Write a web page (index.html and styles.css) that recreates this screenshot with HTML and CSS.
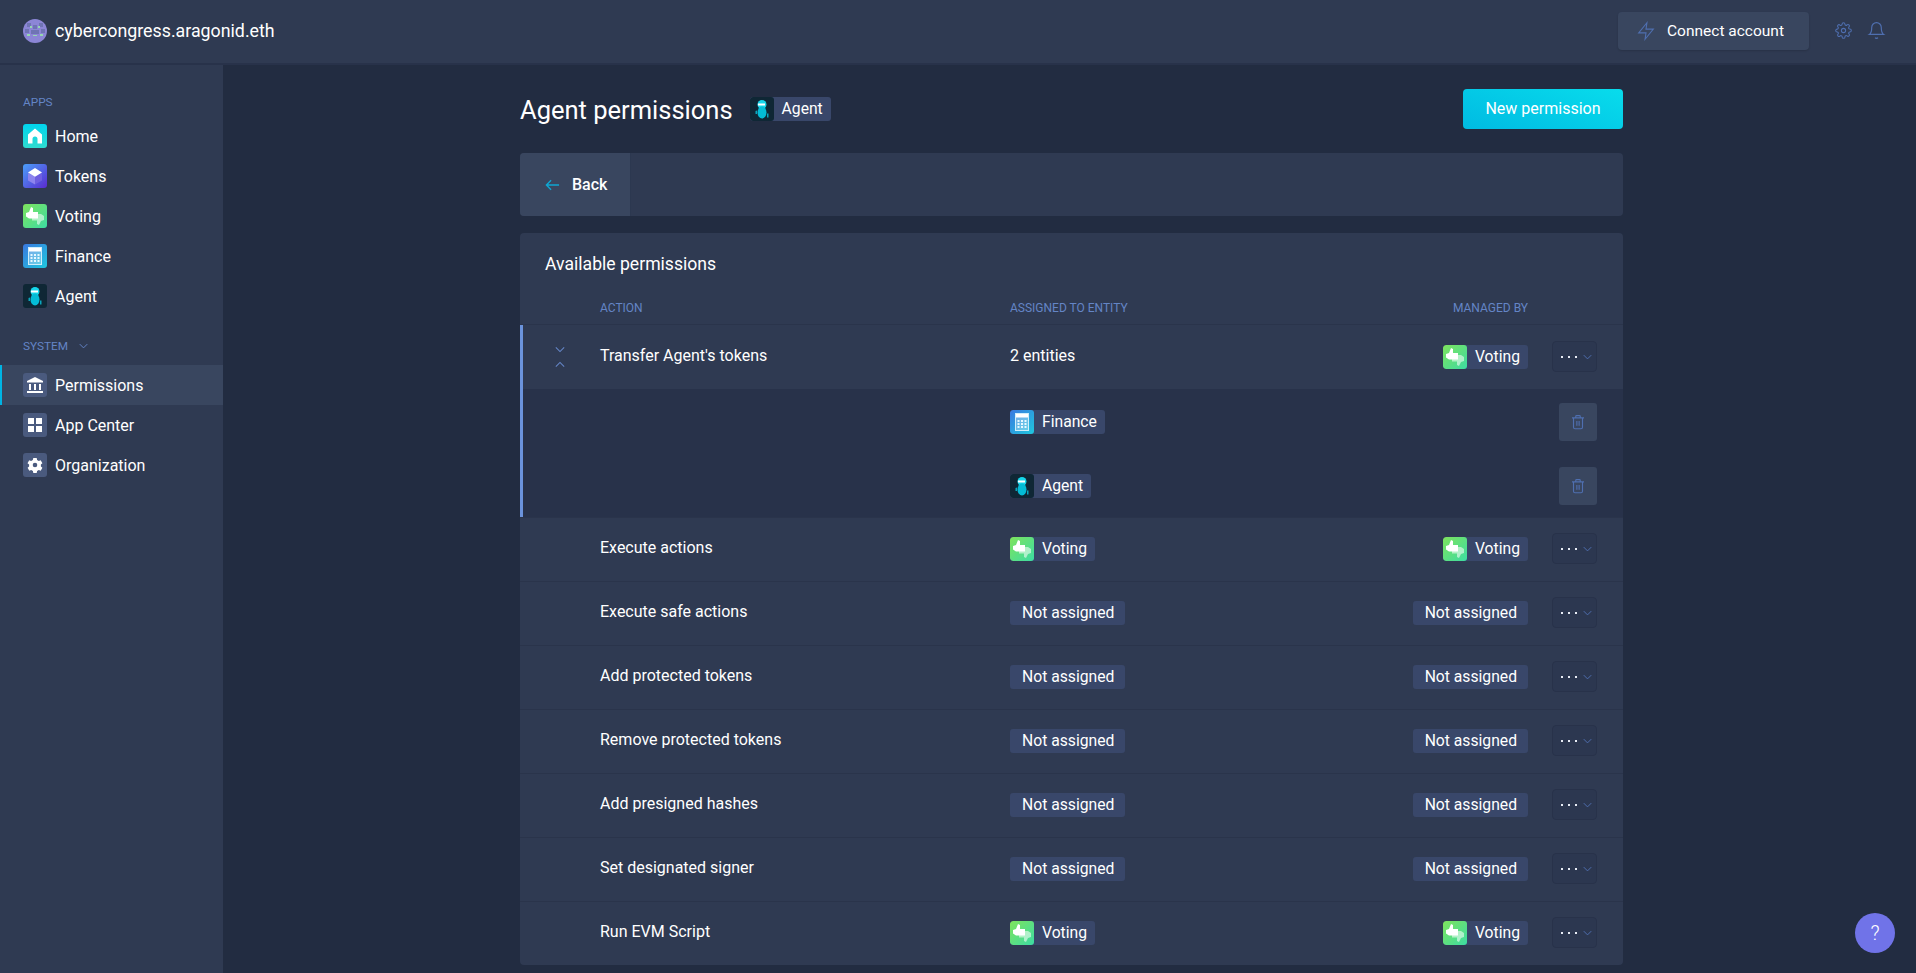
FILE: index.html
```html
<!DOCTYPE html>
<html lang="en">
<head>
  <meta charset="UTF-8" />
  <meta name="viewport" content="width=device-width, initial-scale=1.0" />
  <title>Agent permissions</title>
  <link rel="stylesheet" href="styles.css">
</head>
<body>
  <svg class="sprites" width="0" height="0" aria-hidden="true">
    <symbol id="i-home" viewBox="0 0 24 24">
      <path d="M12 4.500 19 10.500V19.500H14.500V15a2.500 2.500 0 0 0-5 0v4.500H5V10.500Z" fill="#fff"/>
    </symbol>
    <symbol id="i-tokens" viewBox="0 0 24 24">
      <path d="M12 12.500 5 9V16.500L12 20.500Z" fill="#8d84ee"/>
      <path d="M12 12.500 19 9V16.500L12 20.500Z" fill="#6f5fe0"/>
      <path d="M12 4 19 8.500 12 12.800 5 8.500Z" fill="#fff"/>
    </symbol>
    <symbol id="i-voting" viewBox="0 0 24 24">
      <path d="M21 16 18 17 16 21 14 20V16.500H9V10H18L21 12Z" fill="#fff" fill-opacity=".55"/>
      <path d="M3 9 6 8 8 3 10 4V8H15V14.500H6L3 12.500Z" fill="#fff"/>
    </symbol>
    <symbol id="i-finance" viewBox="0 0 24 24">
      <rect x="5.500" y="3.500" width="13" height="17" fill="#fff" fill-opacity=".3" stroke="#cfeefb"/>
      <rect x="6" y="4" width="12" height="3.500" fill="#fff"/>
      <path d="M7.500 10h2v2h-2zM11 10h2v2h-2zM14.500 10h2v2h-2zM7.500 13h2v2h-2zM11 13h2v2h-2zM14.500 13h2v2h-2zM7.500 16h2v2h-2zM11 16h2v2h-2zM14.500 16h2v2h-2z" fill="#e6f8ff"/>
    </symbol>
    <symbol id="i-agent" viewBox="0 0 24 24">
      <circle cx="12" cy="7.500" r="4.500" fill="#16d6ea"/>
      <rect x="8" y="6.500" width="7" height="2" fill="#fff"/>
      <ellipse cx="12" cy="15.500" rx="4.500" ry="6" fill="#04bcd6"/>
      <path d="M5.500 14 7 13.500V17H5.500ZM17 16.500H18.500V20.500H17Z" fill="#0aa6bd"/>
    </symbol>
    <symbol id="i-bank" viewBox="0 0 24 24">
      <path d="M12 4 20 8V9.500H4V8Z M6 11H8V17H6Z M11 11H13V17H11Z M16 11H18V17H16Z M4 18H20V20H4Z" fill="#fff"/>
    </symbol>
    <symbol id="i-grid" viewBox="0 0 24 24">
      <path d="M5 5.500a.500.500 0 0 1 .500-.500H11V11H5ZM13 5H19V11H13ZM5 13H11V19H5ZM13 13H19V19H13Z" fill="#fff"/>
    </symbol>
    <symbol id="i-cog" viewBox="0 0 24 24">
      <path fill-rule="evenodd" d="M10.300 5h3.400l.4 2 1.700 1 1.900-.7 1.700 2.900-1.500 1.300v2l1.500 1.300-1.700 2.900-1.900-.7-1.700 1-.4 2h-3.400l-.4-2-1.700-1-1.900.7-1.700-2.900 1.500-1.300v-2L4.500 10.200l1.700-2.900 1.900.7 1.700-1ZM12 9.700a2.300 2.300 0 1 0 0 4.600 2.300 2.300 0 0 0 0-4.600Z" fill="#fff"/>
    </symbol>
    <symbol id="i-trash" viewBox="0 0 24 24" fill="none" stroke="currentColor" stroke-width="1.500">
      <path d="M4 6.500H20M9 6.500V4.500a1 1 0 0 1 1-1h4a1 1 0 0 1 1 1v2M6 6.500V19a2 2 0 0 0 2 2h8a2 2 0 0 0 2-2V6.500M10.500 10.500v6.500M13.500 10.500v6.500"/>
    </symbol>
    <symbol id="i-down" viewBox="0 0 12 8" fill="none" stroke="currentColor" stroke-width="1.300">
      <path d="M1 1.500 6 6.500 11 1.500"/>
    </symbol>
    <symbol id="i-logo" viewBox="0 0 24 24">
      <circle cx="12" cy="12" r="12" fill="#8c86d6"/>
      <path d="M4 4h4v4H4zM16 4h4v4h-4zM10 6h4v4h-4zM2 10h4v4H2zM18 10h4v4h-4zM8 11h8v4H8z" fill="#6f74b4"/>
      <path d="M7 7h2v2H7zM15 7h2v2h-2zM4 15h3v2H4zM17 15h3v2h-3zM10 17h4v-1h-4z" fill="#96d8b0"/>
    </symbol>
  </svg>

  <header class="topbar">
    <div class="org">
      <svg class="org-logo"><use href="#i-logo"/></svg>
      <span>cybercongress.aragonid.eth</span>
    </div>
    <div class="top-actions">
      <button class="connect-btn">
        <svg viewBox="0 0 24 24" class="line-icon bolt"><polygon points="13 3 4 14 12 14 11 21 20 10 12 10 13 3"/></svg>
        Connect account
      </button>
      <svg viewBox="0 0 24 24" class="line-icon gear">
        <circle cx="12" cy="12" r="3"/>
        <path d="M19.400 15a1.650 1.650 0 0 0 .33 1.820l.06.06a2 2 0 0 1 0 2.830 2 2 0 0 1-2.830 0l-.06-.06a1.650 1.650 0 0 0-1.820-.33 1.650 1.650 0 0 0-1 1.510V21a2 2 0 0 1-2 2 2 2 0 0 1-2-2v-.09A1.650 1.650 0 0 0 9 19.400a1.650 1.650 0 0 0-1.820.33l-.06.06a2 2 0 0 1-2.830 0 2 2 0 0 1 0-2.830l.06-.06a1.650 1.650 0 0 0 .33-1.820 1.650 1.650 0 0 0-1.510-1H3a2 2 0 0 1-2-2 2 2 0 0 1 2-2h.09A1.650 1.650 0 0 0 4.600 9a1.650 1.650 0 0 0-.33-1.820l-.06-.06a2 2 0 0 1 0-2.830 2 2 0 0 1 2.830 0l.06.06a1.650 1.650 0 0 0 1.820.33H9a1.650 1.650 0 0 0 1-1.510V3a2 2 0 0 1 2-2 2 2 0 0 1 2 2v.09a1.650 1.650 0 0 0 1 1.510 1.650 1.650 0 0 0 1.820-.33l.06-.06a2 2 0 0 1 2.830 0 2 2 0 0 1 0 2.830l-.06.06a1.650 1.650 0 0 0-.33 1.820V9a1.650 1.650 0 0 0 1.510 1H21a2 2 0 0 1 2 2 2 2 0 0 1-2 2h-.09a1.650 1.650 0 0 0-1.510 1z"/>
      </svg>
      <svg viewBox="0 0 24 24" class="line-icon bell">
        <path d="M18 8A6 6 0 0 0 6 8c0 7-3 9-3 9h18s-3-2-3-9"/>
        <path d="M13.730 21a2 2 0 0 1-3.460 0"/>
      </svg>
    </div>
  </header>

  <div class="layout">
    <aside class="sidebar">
      <div class="nav-label nav-label-apps">APPS</div>
      <a class="nav-item"><span class="tile tile-home"><svg><use href="#i-home"/></svg></span>Home</a>
      <a class="nav-item"><span class="tile tile-tokens"><svg><use href="#i-tokens"/></svg></span>Tokens</a>
      <a class="nav-item"><span class="tile tile-voting"><svg><use href="#i-voting"/></svg></span>Voting</a>
      <a class="nav-item"><span class="tile tile-finance"><svg><use href="#i-finance"/></svg></span>Finance</a>
      <a class="nav-item"><span class="tile tile-agent"><svg><use href="#i-agent"/></svg></span>Agent</a>
      <div class="nav-label nav-label-system">SYSTEM <svg class="chev"><use href="#i-down"/></svg></div>
      <a class="nav-item active"><span class="tile tile-system"><svg><use href="#i-bank"/></svg></span>Permissions</a>
      <a class="nav-item"><span class="tile tile-system"><svg><use href="#i-grid"/></svg></span>App Center</a>
      <a class="nav-item"><span class="tile tile-system"><svg><use href="#i-cog"/></svg></span>Organization</a>
    </aside>

    <main class="content">
      <div class="page-head">
        <h1>Agent permissions</h1>
        <span class="chip"><span class="tile tile-agent"><svg><use href="#i-agent"/></svg></span><b>Agent</b></span>
        <button class="new-btn">New permission</button>
      </div>

      <div class="back-bar">
        <button class="back-btn">
          <svg viewBox="0 0 16 12" class="back-arrow"><path d="M15 6H1.500M6.500 1 1.500 6l5 5"/></svg>
          Back
        </button>
      </div>

      <section class="card">
        <h2>Available permissions</h2>
        <div class="grid-row thead">
          <span></span>
          <span>ACTION</span>
          <span>ASSIGNED TO ENTITY</span>
          <span class="right">MANAGED BY</span>
          <span></span>
        </div>

        <div class="expanded">
          <div class="grid-row row">
            <span class="toggle"><svg><use href="#i-down"/></svg><svg class="up"><use href="#i-down"/></svg></span>
            <span class="cell-text">Transfer Agent's tokens</span>
            <span class="cell-text">2 entities</span>
            <span class="right"><span class="chip"><span class="tile tile-voting"><svg><use href="#i-voting"/></svg></span><b>Voting</b></span></span>
            <span class="menu-cell"><button class="menu-btn"><i></i><i></i><i></i><svg><use href="#i-down"/></svg></button></span>
          </div>
          <div class="subrows">
            <div class="grid-row subrow">
              <span></span><span></span>
              <span><span class="chip"><span class="tile tile-finance"><svg><use href="#i-finance"/></svg></span><b>Finance</b></span></span>
              <span></span>
              <span class="menu-cell"><button class="trash-btn"><svg><use href="#i-trash"/></svg></button></span>
            </div>
            <div class="grid-row subrow">
              <span></span><span></span>
              <span><span class="chip"><span class="tile tile-agent"><svg><use href="#i-agent"/></svg></span><b>Agent</b></span></span>
              <span></span>
              <span class="menu-cell"><button class="trash-btn"><svg><use href="#i-trash"/></svg></button></span>
            </div>
          </div>
        </div>

        <div class="grid-row row">
          <span></span>
          <span class="cell-text">Execute actions</span>
          <span><span class="chip"><span class="tile tile-voting"><svg><use href="#i-voting"/></svg></span><b>Voting</b></span></span>
          <span class="right"><span class="chip"><span class="tile tile-voting"><svg><use href="#i-voting"/></svg></span><b>Voting</b></span></span>
          <span class="menu-cell"><button class="menu-btn"><i></i><i></i><i></i><svg><use href="#i-down"/></svg></button></span>
        </div>
        <div class="grid-row row">
          <span></span>
          <span class="cell-text">Execute safe actions</span>
          <span><span class="chip"><b>Not assigned</b></span></span>
          <span class="right"><span class="chip"><b>Not assigned</b></span></span>
          <span class="menu-cell"><button class="menu-btn"><i></i><i></i><i></i><svg><use href="#i-down"/></svg></button></span>
        </div>
        <div class="grid-row row">
          <span></span>
          <span class="cell-text">Add protected tokens</span>
          <span><span class="chip"><b>Not assigned</b></span></span>
          <span class="right"><span class="chip"><b>Not assigned</b></span></span>
          <span class="menu-cell"><button class="menu-btn"><i></i><i></i><i></i><svg><use href="#i-down"/></svg></button></span>
        </div>
        <div class="grid-row row">
          <span></span>
          <span class="cell-text">Remove protected tokens</span>
          <span><span class="chip"><b>Not assigned</b></span></span>
          <span class="right"><span class="chip"><b>Not assigned</b></span></span>
          <span class="menu-cell"><button class="menu-btn"><i></i><i></i><i></i><svg><use href="#i-down"/></svg></button></span>
        </div>
        <div class="grid-row row">
          <span></span>
          <span class="cell-text">Add presigned hashes</span>
          <span><span class="chip"><b>Not assigned</b></span></span>
          <span class="right"><span class="chip"><b>Not assigned</b></span></span>
          <span class="menu-cell"><button class="menu-btn"><i></i><i></i><i></i><svg><use href="#i-down"/></svg></button></span>
        </div>
        <div class="grid-row row">
          <span></span>
          <span class="cell-text">Set designated signer</span>
          <span><span class="chip"><b>Not assigned</b></span></span>
          <span class="right"><span class="chip"><b>Not assigned</b></span></span>
          <span class="menu-cell"><button class="menu-btn"><i></i><i></i><i></i><svg><use href="#i-down"/></svg></button></span>
        </div>
        <div class="grid-row row">
          <span></span>
          <span class="cell-text">Run EVM Script</span>
          <span><span class="chip"><span class="tile tile-voting"><svg><use href="#i-voting"/></svg></span><b>Voting</b></span></span>
          <span class="right"><span class="chip"><span class="tile tile-voting"><svg><use href="#i-voting"/></svg></span><b>Voting</b></span></span>
          <span class="menu-cell"><button class="menu-btn"><i></i><i></i><i></i><svg><use href="#i-down"/></svg></button></span>
        </div>
      </section>
    </main>
  </div>

  <button class="help-btn">?</button>
</body>
</html>
```

FILE: styles.css
```css
* {
  box-sizing: border-box;
}
html {
  height: 100%;
  overflow: hidden;
}
body {
  font-family: Roboto, "Noto Sans", Arial, sans-serif;
  font-size: 16px;
  margin: 0;
  height: 100%;
  overflow: hidden;
  display: flex;
  flex-direction: column;
  background-color: #222c41;
  color: #fff;
}
button {
  font: inherit;
  color: inherit;
  border: 0;
  padding: 0;
  cursor: pointer;
}
.sprites {
  position: absolute;
}

/* top bar */
.topbar {
  height: 65px;
  flex: none;
  display: flex;
  align-items: center;
  justify-content: space-between;
  padding: 0 30px 2px 23px;
  background-color: #2f3a52;
  border-bottom: 2px solid #28324a;
}
.org {
  display: flex;
  align-items: center;
  gap: 8px;
  font-size: 17.800px;
}
.org-logo {
  width: 24px;
  height: 24px;
}
.top-actions {
  display: flex;
  align-items: center;
}
.connect-btn {
  width: 191px;
  height: 38px;
  display: flex;
  align-items: center;
  gap: 10px;
  padding-left: 17px;
  background-color: #39465f;
  border-radius: 4px;
  box-shadow: 0 1px 2px rgba(0, 0, 0, 0.15);
  font-size: 15.500px;
}
.line-icon {
  width: 17px;
  height: 17px;
  fill: none;
  stroke: #4f6fb0;
  stroke-width: 1.500;
}
.bolt {
  width: 22px;
  height: 22px;
  stroke-width: 1.200;
}
.gear {
  margin-left: 26px;
}
.bell {
  width: 19px;
  height: 19px;
  margin-left: 15px;
}

/* sidebar */
.layout {
  flex: 1;
  display: flex;
  min-height: 0;
  overflow: hidden;
}
.sidebar {
  width: 223px;
  flex: none;
  background-color: #2f3a52;
}
.nav-label {
  display: flex;
  align-items: center;
  padding-left: 23px;
  font-size: 11.800px;
  color: #6485c6;
  height: 16px;
}
.nav-label-apps {
  margin-top: 29px;
  margin-bottom: 6px;
}
.nav-label-system {
  margin-top: 22px;
  margin-bottom: 11px;
}
.chev {
  width: 9px;
  height: 6px;
  margin-left: 11px;
}
.nav-item {
  height: 40px;
  display: flex;
  align-items: center;
  gap: 8px;
  padding-left: 23px;
}
.nav-item.active {
  background-color: #39465f;
  box-shadow: inset 2px 0 0 #00b4e4;
}

/* app icons */
.tile {
  width: 24px;
  height: 24px;
  flex: none;
  border-radius: 3px;
  overflow: hidden;
}
.tile svg {
  display: block;
  width: 24px;
  height: 24px;
}
.tile-home { background: linear-gradient(180deg, #00d4ee, #2fdcd0); }
.tile-tokens { background: linear-gradient(135deg, #4a9ffa, #5a2bd0); }
.tile-voting { background: linear-gradient(135deg, #7fe35c, #3cdca4); }
.tile-finance { background: linear-gradient(135deg, #3a78e0, #1fc8de); }
.tile-agent { background-color: #0f2735; }
.tile-system { background-color: #4a5a7e; }

/* page */
.content {
  width: 1103px;
  margin-left: 297px;
}
.page-head {
  height: 88px;
  display: flex;
  align-items: center;
}
.page-head h1 {
  margin: 2px 17px 0 0;
  font-size: 25.500px;
  font-weight: 400;
}
.new-btn {
  margin-left: auto;
  width: 160px;
  height: 40px;
  padding-bottom: 2px;
  border-radius: 4px;
  background: linear-gradient(200deg, #08dcec, #00bbe2);
}
.back-bar {
  height: 63px;
  background-color: #2f3a52;
  border-radius: 4px;
  overflow: hidden;
}
.back-btn {
  height: 63px;
  width: 111px;
  display: flex;
  align-items: center;
  gap: 12px;
  padding-left: 25px;
  background-color: #39465f;
  border-right: 1px solid #2c3850;
  font-weight: 500;
}
.back-arrow {
  width: 15px;
  height: 12px;
  fill: none;
  stroke: #0fa6d2;
  stroke-width: 1.500;
}

/* table card */
.card {
  margin-top: 17px;
  background-color: #2f3a52;
  border-radius: 4px;
  overflow: hidden;
}
.card h2 {
  margin: 0;
  height: 62px;
  display: flex;
  align-items: center;
  padding-left: 25px;
  font-size: 17.600px;
  font-weight: 400;
}
.grid-row {
  display: grid;
  grid-template-columns: 80px 410px 1fr 1fr 95px;
  align-items: center;
}
.thead {
  height: 30px;
  padding-bottom: 3px;
  font-size: 12px;
  color: #6485c6;
  border-bottom: 1px solid #2a344b;
}
.right {
  justify-self: end;
}
.row {
  height: 64px;
  padding-bottom: 1px;
  border-top: 1px solid #2a344b;
}
.cell-text {
  padding-bottom: 4px;
}
.expanded {
  position: relative;
}
.expanded .row {
  border-top-color: transparent;
}
.expanded::before {
  content: "";
  position: absolute;
  top: 0;
  bottom: 0;
  left: 0;
  width: 3px;
  background-color: #6b93dc;
}
.subrows {
  background-color: #28324a;
}
.subrow {
  height: 64px;
  padding-top: 2px;
}
.chip {
  display: flex;
  width: fit-content;
  height: 24px;
  background-color: #39476a;
  border-radius: 3px;
  overflow: hidden;
  font-size: 15.700px;
}
.chip b {
  padding: 0 8px;
  line-height: 24px;
  font-weight: 400;
}
.chip > b:first-child {
  padding: 0 11px 0 12px;
}
.toggle {
  justify-self: center;
  display: flex;
  flex-direction: column;
  gap: 8px;
  color: #6485c6;
}
.toggle svg {
  display: block;
  width: 10px;
  height: 7px;
}
.toggle .up {
  transform: rotate(180deg);
}
.menu-cell {
  display: flex;
  justify-content: flex-end;
  padding-right: 26px;
}
.menu-btn {
  width: 45px;
  height: 31px;
  margin-bottom: 1px;
  display: flex;
  align-items: center;
  gap: 5px;
  padding-left: 8px;
  background-color: #2c3750;
  border: 1px solid #28324a;
  border-radius: 4px;
  color: #4f6fb0;
}
.menu-btn i {
  width: 2px;
  height: 2px;
  background-color: #e8ecf5;
}
.menu-btn svg {
  width: 9px;
  height: 6px;
  margin-left: 1px;
}
.trash-btn {
  width: 38px;
  height: 38px;
  display: flex;
  align-items: center;
  justify-content: center;
  background-color: #39465f;
  border-radius: 3px;
  color: #4f6fb0;
}
.trash-btn svg {
  width: 18px;
  height: 18px;
}
.help-btn {
  position: fixed;
  right: 21px;
  bottom: 20px;
  width: 40px;
  height: 40px;
  border-radius: 50%;
  background-color: #7073e8;
  font-size: 20px;
  font-weight: 300;
}
```
